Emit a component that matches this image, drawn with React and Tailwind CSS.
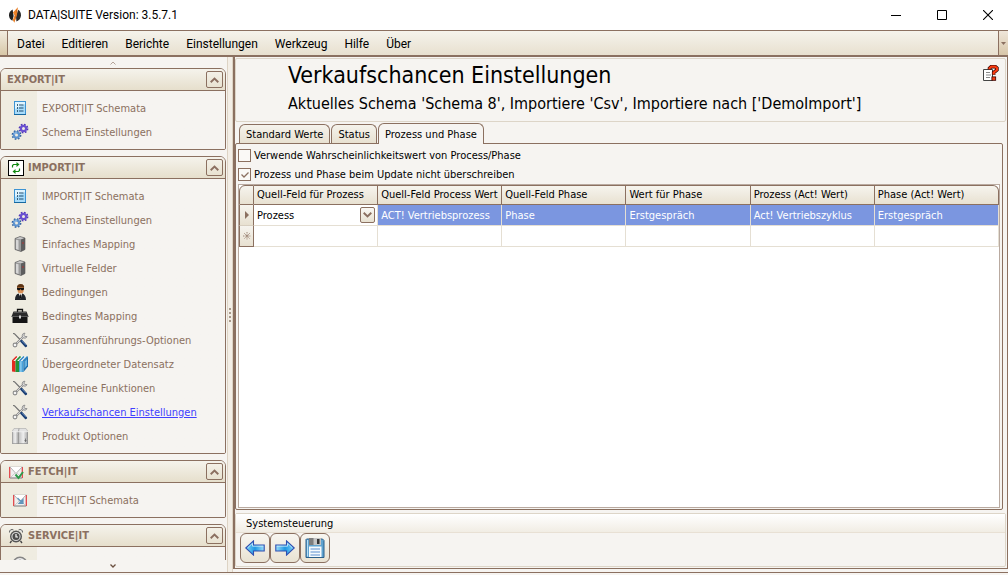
import { useState } from 'react';

function LogoIcon() {
  return (
    <svg viewBox="0 0 16 16" className="h-4 w-4 shrink-0" aria-hidden="true">
      <path d="M5.6 2.6C3 4 2 6 2 8.2c0 2.400 1.200 4.300 3.400 5.600L6.600 9z" fill="#1f1f1f" />
      <path d="M11.200 2.800C13 4 14 6 14 8.200c0 3-2 5.300-4.600 6.300L9 9z" fill="#2b2b2b" />
      <path d="M10.800.3 6 5.400 7.600 8.400 5.800 13 7.300 15.800 10 8z" fill="#f0862a" />
      <path d="M10.800.3 8.800 5l.6 3.400L7.300 15.800 9 6.500z" fill="#c4581a" />
    </svg>
  );
}

function ListIcon() {
  return (
    <svg viewBox="0 0 16 16" className="h-4 w-4" aria-hidden="true">
      <rect x="2.500" y="1.500" width="11" height="13" fill="#a9dcfa" stroke="#3d93d3" />
      <path d="M3 2h10v2L3 9z" fill="#dff4ff" />
      <path d="M5 5h1M5 8h1M5 11h1" stroke="#12364f" strokeWidth="1.300" />
      <path d="M7 5h4.500M7 8h4.500M7 11h4.500" stroke="#1f4d70" strokeWidth="1.100" />
      <path d="M2 14.500h12" stroke="#17689f" />
    </svg>
  );
}

function GearsIcon() {
  return (
    <svg viewBox="0 0 18 18" className="h-[18px] w-[18px]" aria-hidden="true">
      <circle cx="12.500" cy="5.500" r="4" fill="none" stroke="#5038b8" strokeWidth="1.800" strokeDasharray="1.600 1.542" />
      <circle cx="12.500" cy="5.500" r="2.600" fill="none" stroke="#6a50d0" strokeWidth="2.200" />
      <circle cx="5.500" cy="12" r="4" fill="none" stroke="#33629f" strokeWidth="1.800" strokeDasharray="1.600 1.542" />
      <circle cx="5.500" cy="12" r="2.600" fill="none" stroke="#5d93cf" strokeWidth="2.200" />
      <path d="M3.500 11.500a2.300 2.300 0 0 1 2-2" fill="none" stroke="#b6d6f2" strokeWidth=".8" />
    </svg>
  );
}

function ServerIcon() {
  return (
    <svg viewBox="0 0 16 16" className="h-4 w-4" aria-hidden="true">
      <path d="M3 2.500 8 .5l5 1.500v11.500L9 15.500l-6-2z" fill="#8b8b8b" />
      <path d="M3 2.500 8 .5l5 1.500-4 1.500z" fill="#c9c9c9" />
      <path d="M3 2.500 9 3.500v12l-6-2z" fill="#9a9a9a" />
      <path d="M4 3.800l2.500.4v9.800L4 13.200z" fill="#d6d6d6" />
      <path d="M9 3.500l4-1.500v11.500l-4 2z" fill="#5e5e5e" />
      <path d="M11 6v2" stroke="#a33" />
      <path d="M3 2.500 8 .5l5 1.500v11.500L9 15.500l-6-2z" fill="none" stroke="#555" strokeWidth=".6" />
    </svg>
  );
}

function AgentIcon() {
  return (
    <svg viewBox="0 0 16 16" className="h-4 w-4" aria-hidden="true">
      <path d="M5 4.500C4.500 1.500 6 0 8.700 0s3.800 1.500 3.300 4.500z" fill="#5e3413" />
      <path d="M5.500 3.500h6.200v3c0 2-1.400 3.200-3.100 3.200S5.500 8.500 5.500 6.500z" fill="#d99058" />
      <path d="M5 4h7v1.600l-1.200.7H9.400L8.600 5l-.8 1.300H6.200L5 5.500z" fill="#111" />
      <path d="M3 16c0-3.600 1.200-5.600 3.500-6.400L8.500 12l1.800-2.400C12.500 10.400 14 12.400 14 16z" fill="#20242a" />
      <path d="M7 9.500h3L8.800 15z" fill="#f6f6f6" />
      <path d="M8.100 10.500h1l.3 3-.8 1.500-.6-1.500z" fill="#111" />
    </svg>
  );
}

function BriefcaseIcon() {
  return (
    <svg viewBox="0 0 18 16" className="h-4 w-[18px]" aria-hidden="true">
      <path d="M6.500 4V1.500h5V4" fill="none" stroke="#111" strokeWidth="1.300" />
      <path d="M2.500 3.500h13l2 5H.5z" fill="#2a2a2a" />
      <rect x="1.500" y="8" width="15" height="7" fill="#151515" />
      <path d="M.5 8.500h17" stroke="#5a5a5a" />
      <path d="M3 4.500h12" stroke="#6a6a6a" strokeWidth=".7" />
      <rect x="8" y="7.500" width="2" height="3" fill="#d4d4d4" />
    </svg>
  );
}

function ToolsIcon() {
  return (
    <svg viewBox="0 0 16 16" className="h-4 w-4" aria-hidden="true">
      <path d="M1 1.500l1.500.3L9 8.500" fill="none" stroke="#707070" strokeWidth="1.100" />
      <path d="M4.300 11.800 11 5" stroke="#858585" strokeWidth="2" />
      <path d="M4.300 11.800 11 5" stroke="#e4e4e4" strokeWidth=".9" />
      <path d="M13 1.200a2.500 2.500 0 1 0 2 3.400l-2.300-.2-.9-1.400z" fill="#e0e0e0" stroke="#8a8a8a" strokeWidth=".9" />
      <circle cx="3" cy="13" r="1.900" fill="#f5f5f5" stroke="#8b8b8b" strokeWidth="1.100" />
      <path d="M9.500 9.200l4.300 4.600" stroke="#1c3f73" strokeWidth="2.700" strokeLinecap="round" />
      <path d="M9.800 8.800l4 4.200" stroke="#5e86bd" strokeWidth=".8" />
    </svg>
  );
}

function BooksIcon() {
  return (
    <svg viewBox="0 0 16 16" className="h-4 w-4" aria-hidden="true">
      <path d="M0 5 4.500.5H16L11.500 5z" fill="#f7f7f7" />
      <path d="M0 5h3.500v11L0 15.500z" fill="#e32a20" />
      <path d="M3.500 5H7v11H3.500z" fill="#219338" />
      <path d="M7 5h4.500v11H7z" fill="#4aa3da" />
      <path d="M8.300 5h1.200v11H8.300z" fill="#9ad4f4" />
      <path d="M11.500 5 16 .5v10L11.500 16z" fill="#1f6fae" />
      <path d="M12.500 5.500 15 3v6.500l-2.500 3z" fill="#67b3e0" />
      <path d="M.3 5 4.800.5" stroke="#e32a20" strokeWidth="1.500" />
      <path d="M4 5 8.500.5" stroke="#219338" strokeWidth="1.700" />
      <path d="M7.500 5 12 .5" stroke="#2f86c4" strokeWidth="1.500" />
      <path d="M11 5 15.500.5" stroke="#2f86c4" strokeWidth="1.200" />
    </svg>
  );
}

function PackageIcon() {
  return (
    <svg viewBox="0 0 16 16" className="h-4 w-4" aria-hidden="true">
      <defs>
        <linearGradient id="packageSide" x1="0" y1="0" x2="1" y2="0">
          <stop offset="0" stopColor="#bdbdbd" />
          <stop offset=".5" stopColor="#efefef" />
          <stop offset="1" stopColor="#a2a2a2" />
        </linearGradient>
      </defs>
      <path d="M0 3.500 2 .5h12l2 3z" fill="#e2e2e2" stroke="#aaa" strokeWidth=".6" />
      <path d="M0 3.500h6.500V16H0z" fill="url(#packageSide)" />
      <path d="M6.500 3.500H16V16H6.500z" fill="url(#packageSide)" />
      <path d="M6.500 16V3.500L7 .5" fill="none" stroke="#888" strokeWidth=".7" />
      <path d="M0 3.700h16" stroke="#fafafa" strokeWidth=".8" />
      <path d="M13.500 10.500v3.500M12.500 12.500h2" stroke="#666" strokeWidth=".8" />
      <path d="M.3 4v11.600h15.400V4" fill="none" stroke="#8c8c8c" strokeWidth=".7" />
    </svg>
  );
}

function MailIcon({ checked }) {
  return (
    <svg viewBox="0 0 16 16" className="h-4 w-4" aria-hidden="true">
      <rect x="1.500" y="3" width="13" height="11" fill="#efefef" stroke="#b9b9b9" strokeWidth=".7" />
      <path d="M1.700 3v11M14.300 3v11" fill="none" stroke="#e3474a" strokeWidth="1.300" />
      <path d="M2 14l5-5M14 14 9 9" stroke="#c4c4c4" strokeWidth=".8" />
      <path d="M2 3 8 9.500 14 3" fill="#fff" stroke="#a9a9a9" strokeWidth=".9" />
      <path d="M2 14h12" stroke="#8a8a8a" />
      {checked ? (
        <path d="M7.500 10.500l3 3.500L15 8" fill="none" stroke="#2e9b4b" strokeWidth="2" />
      ) : (
        <path d="M5.500 6l4.500 4.500M11 7.500V11.500H7z" fill="#7aa6c4" stroke="#5e93ba" strokeWidth="1.200" />
      )}
    </svg>
  );
}

function RefreshIcon() {
  return (
    <svg viewBox="0 0 16 16" className="h-4 w-4" aria-hidden="true">
      <rect x=".5" y=".5" width="15" height="15" fill="#fff" stroke="#000" />
      <path d="M4.500 7.500v-2l1-1h4M11.500 8.500v2l-1 1h-4" fill="none" stroke="#138a13" strokeWidth="1.200" />
      <path d="M8.500 2l3 2.500-3 2.500zM7.500 9l-3 2.500 3 2.500z" fill="#138a13" />
    </svg>
  );
}

function ClockIcon() {
  return (
    <svg viewBox="0 0 16 16" className="h-4 w-4" aria-hidden="true">
      <path d="M1.500 4.500a2.500 2.500 0 0 1 4-2.500M14.500 4.500a2.500 2.500 0 0 0-4-2.500" fill="#ddd" stroke="#666" />
      <path d="M3.500 13 2 15M12.500 13l1.500 2" stroke="#444" strokeWidth="1.300" />
      <circle cx="8" cy="8.500" r="5.300" fill="#d8d8d8" stroke="#555" strokeWidth="1.400" />
      <circle cx="8" cy="8.500" r="3.500" fill="#4b4b4b" />
      <path d="M8 6v3h2" fill="none" stroke="#fff" strokeWidth="1.200" />
    </svg>
  );
}

function TaskClockIcon() {
  return (
    <svg viewBox="0 0 16 16" className="h-4 w-4" aria-hidden="true">
      <circle cx="8" cy="8" r="6.800" fill="#ededed" stroke="#858585" strokeWidth="1.600" />
      <path d="M8 3.500V8l3 2" fill="none" stroke="#777" />
    </svg>
  );
}

function HelpIcon() {
  return (
    <svg viewBox="0 0 16 16" className="h-4 w-4" aria-hidden="true">
      <path d="M.5 4.500h9v11h-9z" fill="#fff" stroke="#444" />
      <path d="M3 7.500h4M3 10h5M3 12.500h4" stroke="#8a8a8a" />
      <path d="M6.500 4.500V3.200L8.300 1.600h3.900L13.900 3v2L10.700 7.600v2.200" fill="none" stroke="#300" strokeWidth="3.600" />
      <path d="M6.500 4.200V3.200L8.300 1.600h3.900L13.900 3v2L10.700 7.600v1.900" fill="none" stroke="#fa3c10" strokeWidth="2.200" />
      <rect x="8.900" y="11.900" width="3.800" height="3.400" fill="#fa3c10" stroke="#300" strokeWidth=".8" />
    </svg>
  );
}

function ArrowIcon({ flipped }) {
  return (
    <svg viewBox="0 0 20 16" className={`h-4 w-5 ${flipped ? '-scale-x-100' : ''}`} aria-hidden="true">
      <defs>
        <linearGradient id="arrowFill" x1="0" y1="0" x2="1" y2="0">
          <stop offset="0" stopColor="#7fd4fa" />
          <stop offset=".5" stopColor="#1f98e2" />
          <stop offset="1" stopColor="#9adcfa" />
        </linearGradient>
      </defs>
      <path d="M.8 8 8.500.9V5h10.700v6H8.500v4.100z" fill="url(#arrowFill)" stroke="#2f4fb0" strokeWidth="1.100" />
      <path d="M2.600 7.800 7.500 3.300V6.200h10.800" fill="none" stroke="#d3f0fd" strokeWidth=".8" />
    </svg>
  );
}

function SaveIcon() {
  return (
    <svg viewBox="0 0 20 20" className="h-5 w-5" aria-hidden="true">
      <path d="M1.500 1h16l1.500 1.500V19.500H1V1.500z" fill="#5fa3d0" stroke="#2b5f8a" />
      <path d="M2.500 2v16.500" stroke="#b7def5" />
      <rect x="4" y="0" width="12" height="7" fill="#c4c4c4" />
      <path d="M4 0h4.500v7H4z" fill="#7d7d7d" />
      <rect x="12" y="1" width="2.500" height="5" fill="#333" />
      <rect x="4" y="8.500" width="12.500" height="10.500" fill="#f5fafd" />
      <path d="M5.500 11h9.500M5.500 14h9.500M5.500 17h9.500" stroke="#5a8fd0" />
    </svg>
  );
}

function Chevron({ up }) {
  return (
    <svg viewBox="0 0 9 6" className={`h-1.5 w-[9px] ${up ? '' : 'rotate-180'}`} aria-hidden="true">
      <path d="M.7 5.200 4.500 1.500l3.800 3.700" fill="none" stroke="#8b6f60" strokeWidth="1.900" />
    </svg>
  );
}

const menuItems = ['Datei', 'Editieren', 'Berichte', 'Einstellungen', 'Werkzeug', 'Hilfe', 'Über'];

const groups = [
  {
    title: 'EXPORT|IT',
    items: [
      { label: 'EXPORT|IT Schemata', icon: <ListIcon /> },
      { label: 'Schema Einstellungen', icon: <GearsIcon /> },
    ],
  },
  {
    title: 'IMPORT|IT',
    icon: <RefreshIcon />,
    items: [
      { label: 'IMPORT|IT Schemata', icon: <ListIcon /> },
      { label: 'Schema Einstellungen', icon: <GearsIcon /> },
      { label: 'Einfaches Mapping', icon: <ServerIcon /> },
      { label: 'Virtuelle Felder', icon: <ServerIcon /> },
      { label: 'Bedingungen', icon: <AgentIcon /> },
      { label: 'Bedingtes Mapping', icon: <BriefcaseIcon /> },
      { label: 'Zusammenführungs-Optionen', icon: <ToolsIcon /> },
      { label: 'Übergeordneter Datensatz', icon: <BooksIcon /> },
      { label: 'Allgemeine Funktionen', icon: <ToolsIcon /> },
      { label: 'Verkaufschancen Einstellungen', icon: <ToolsIcon />, active: true },
      { label: 'Produkt Optionen', icon: <PackageIcon /> },
    ],
  },
  {
    title: 'FETCH|IT',
    icon: <MailIcon checked />,
    items: [{ label: 'FETCH|IT Schemata', icon: <MailIcon /> }],
  },
  {
    title: 'SERVICE|IT',
    icon: <ClockIcon />,
    items: [{ label: 'Tasks', icon: <TaskClockIcon /> }],
  },
];

const tabs = ['Standard Werte', 'Status', 'Prozess und Phase'];

const columns = [
  'Quell-Feld für Prozess',
  'Quell-Feld Process Wert',
  'Quell-Feld Phase',
  'Wert für Phase',
  'Prozess (Act! Wert)',
  'Phase (Act! Wert)',
];

const rowValues = ['ACT! Vertriebsprozess', 'Phase', 'Erstgespräch', 'Act! Vertriebszyklus', 'Erstgespräch'];

function TitleBar() {
  return (
    <header className="flex h-[30px] shrink-0 items-center bg-white pr-[15px] pl-[7px] font-[Roboto,sans-serif] text-xs text-black">
      <LogoIcon />
      <h1 className="ml-[5px] flex-1">DATA|SUITE Version: 3.5.7.1</h1>
      <div className="flex h-full gap-9">
        <button type="button" aria-label="Minimieren">
          <svg viewBox="0 0 10 10" className="h-2.5 w-2.5"><path d="M0 5.500h10" stroke="#000" /></svg>
        </button>
        <button type="button" aria-label="Maximieren">
          <svg viewBox="0 0 10 10" className="h-2.5 w-2.5"><path d="M.5.5h9v9h-9z" fill="none" stroke="#000" /></svg>
        </button>
        <button type="button" aria-label="Schließen">
          <svg viewBox="0 0 10 10" className="h-2.5 w-2.5"><path d="M0 0l10 10M10 0 0 10" stroke="#000" strokeWidth="1.100" /></svg>
        </button>
      </div>
    </header>
  );
}

function MenuBar() {
  return (
    <nav className="flex h-[27px] shrink-0 border-t border-b-2 border-[#8b7060] bg-linear-to-b from-[#f5f3ec] to-[#e8e0cf] font-[Roboto,sans-serif] text-xs text-black">
      <div className="w-2 border-r border-[#8b7060] bg-linear-to-b from-[#f1ece0] to-[#d8c8a8]" />
      <ul className="flex flex-1 items-center gap-[17px] pt-px pl-[9px]">
        {menuItems.map((item) => (
          <li key={item}>
            <button type="button">{item}</button>
          </li>
        ))}
      </ul>
      <button
        type="button"
        aria-label="Weitere Befehle"
        className="flex w-2.5 items-center justify-center border-l border-[#8b7060] bg-linear-to-b from-[#efe6da] to-[#d8c6a8]"
      >
        <svg viewBox="0 0 5 3" className="h-[3px] w-[5px]"><path d="M0 0h5L2.500 3z" fill="#8b7060" /></svg>
      </button>
    </nav>
  );
}

function SidebarGroup({ group }) {
  const [open, setOpen] = useState(true);

  return (
    <section className="shrink-0 overflow-hidden rounded-t-md rounded-b-xs border border-[#8b7060]">
      <div className="flex h-[22px] items-center border-b border-[#8b7060] bg-linear-to-b from-[#f5f3ec] to-[#e6dfcc] pr-0.5 pl-1.5">
        {group.icon && <span className="mr-1 ml-px">{group.icon}</span>}
        <h2 className="flex-1 text-[11px] font-bold text-[#8b7060]">{group.title}</h2>
        <button
          type="button"
          aria-label={group.title}
          aria-expanded={open}
          onClick={() => setOpen(!open)}
          className="flex h-[17px] w-[17px] items-center justify-center rounded-xs border border-[#8b7060]"
        >
          <Chevron up={open} />
        </button>
      </div>
      {open && (
        <ul className="bg-linear-to-r from-[#efece1] from-[36px] to-[#f6f4f1] to-[36px] py-[5px]">
          {group.items.map((item) => (
            <li key={item.label} className="flex h-6 items-center">
              <span className="flex w-[38px] justify-center">{item.icon}</span>
              <a
                href="#"
                className={`ml-[3px] pt-0.5 whitespace-nowrap ${item.active ? 'text-[#4040ff] underline' : 'text-[#8b7060]'}`}
              >
                {item.label}
              </a>
            </li>
          ))}
        </ul>
      )}
    </section>
  );
}

function Sidebar() {
  return (
    <aside className="flex w-[226px] shrink-0 flex-col">
      <button type="button" aria-label="Nach oben" className="flex h-[11px] shrink-0 items-center justify-center opacity-60">
        <svg viewBox="0 0 6 4" className="h-1 w-1.5"><path d="M.5 3.500 3 1l2.500 2.500" fill="none" stroke="#8b7060" /></svg>
      </button>
      <div className="flex min-h-0 flex-1 flex-col gap-1.5 overflow-hidden">
        {groups.map((group) => (
          <SidebarGroup key={group.title} group={group} />
        ))}
      </div>
      <button type="button" aria-label="Nach unten" className="flex h-3 shrink-0 items-center justify-center">
        <svg viewBox="0 0 6 4" className="h-1 w-1.5"><path d="M.5.5 3 3 5.500.5" fill="none" stroke="#6b5040" strokeWidth="1.300" /></svg>
      </button>
    </aside>
  );
}

function Option({ label, checked, onChange }) {
  return (
    <label className="flex h-[19px] items-center gap-[3px]">
      <input
        type="checkbox"
        checked={checked}
        onChange={(event) => onChange(event.target.checked)}
        className="peer sr-only"
      />
      <span className="flex h-[13px] w-[13px] items-center justify-center border border-[#8b7060] bg-[#faf9f6]">
        {checked && (
          <svg viewBox="0 0 8 8" className="h-2 w-2"><path d="M.5 3.500 3 6l4.500-4.500" fill="none" stroke="#8b7060" strokeWidth="1.300" /></svg>
        )}
      </span>
      {label}
    </label>
  );
}

function MappingTable() {
  const [source, setSource] = useState('Prozess');

  return (
    <div className="min-h-0 flex-1 border border-[#b9aaa0] bg-white">
      <table className="w-full table-fixed border-separate border-spacing-0 text-left">
        <colgroup>
          <col className="w-[15px]" />
          {columns.map((column) => (
            <col key={column} />
          ))}
        </colgroup>
        <thead>
          <tr className="h-5">
            <th className="rounded-tl-md border border-[#8b7060] bg-linear-to-b from-[#f6f4ee] to-[#e8e1d1] p-0" aria-label="Zeile" />
            {columns.map((column) => (
              <th
                key={column}
                scope="col"
                className="overflow-hidden border-y border-r border-[#8b7060] bg-linear-to-b from-[#f6f4ee] to-[#e8e1d1] p-0 pl-[3px] font-normal whitespace-nowrap last:rounded-tr-md"
              >
                {column}
              </th>
            ))}
          </tr>
        </thead>
        <tbody>
          <tr className="h-[21px]">
            <td className="border-r border-b border-l border-[#8b7060] border-b-[#d8cfc0] bg-linear-to-b from-[#f6f4ee] to-[#e8e1d1] p-0">
              <svg viewBox="0 0 4 8" className="mx-auto h-2 w-1"><path d="M0 0l4 4-4 4z" fill="#8b7060" /></svg>
            </td>
            <td className="border-r border-b border-[#e5dfd3] p-0">
              <div className="relative">
                <select
                  aria-label="Quell-Feld für Prozess"
                  value={source}
                  onChange={(event) => setSource(event.target.value)}
                  className="block h-5 w-full appearance-none pt-px pl-[3px] outline-none"
                >
                  <option>Prozess</option>
                  <option>Phase</option>
                </select>
                <span className="pointer-events-none absolute top-0.5 right-0.5 flex h-4 w-[15px] items-center justify-center rounded-xs border border-[#8b7060] bg-linear-to-b from-[#faf8f4] to-[#e8e1d1]">
                  <Chevron />
                </span>
              </div>
            </td>
            {rowValues.map((value, index) => (
              <td
                key={index}
                className="border-r border-b border-[#e5dfd3] bg-[#7b96e0] p-0 pt-px pl-[3px] whitespace-nowrap text-white"
              >
                {value}
              </td>
            ))}
          </tr>
          <tr className="h-[21px]">
            <td className="border-r border-b border-l border-[#8b7060] bg-linear-to-b from-[#f6f4ee] to-[#e8e1d1] p-0">
              <svg viewBox="0 0 8 8" className="mx-auto h-2 w-2">
                <path d="M4 0v8M0 4h8M1 1l6 6M7 1 1 7" stroke="#8b7060" strokeWidth=".8" strokeDasharray="1 .6" />
              </svg>
            </td>
            {columns.map((column) => (
              <td key={column} className="border-r border-b border-[#e5dfd3] p-0" />
            ))}
          </tr>
        </tbody>
      </table>
    </div>
  );
}

function SettingsPanel() {
  const [activeTab, setActiveTab] = useState('Prozess und Phase');
  const [useProbability, setUseProbability] = useState(false);
  const [keepOnUpdate, setKeepOnUpdate] = useState(true);

  return (
    <main className="mb-[3px] flex min-w-0 flex-1 flex-col border-r border-b border-l-2 border-[#8b7060] pt-px pr-px pb-px">
      <div className="flex h-16 shrink-0 items-start justify-between rounded-xs border border-[#ddd5c8] pr-1.5 pl-[52px] text-black">
        <div>
          <h2 className="text-[23px] leading-8">Verkaufschancen Einstellungen</h2>
          <p className="text-base leading-[26px]">
            Aktuelles Schema 'Schema 8', Importiere 'Csv', Importiere nach ['DemoImport']
          </p>
        </div>
        <button type="button" aria-label="Hilfe" className="mt-1.5">
          <HelpIcon />
        </button>
      </div>

      <div role="tablist" className="mt-px flex h-5 shrink-0 items-end gap-px pl-1 text-black">
        {tabs.map((tab) => (
          <button
            key={tab}
            type="button"
            role="tab"
            aria-selected={tab === activeTab}
            onClick={() => setActiveTab(tab)}
            className={`rounded-t-md border border-b-0 border-[#8b7060] px-1.5 pt-px whitespace-nowrap ${
              tab === activeTab
                ? 'z-10 -mb-px h-[21px] bg-[#f6f4f1]'
                : 'h-[19px] bg-linear-to-b from-[#f5f3ec] to-[#e8e1d1]'
            }`}
          >
            {tab}
          </button>
        ))}
      </div>

      <div
        role="tabpanel"
        className="mr-[3px] flex min-h-0 flex-1 flex-col rounded-xs border border-[#8b7060] px-0.5 pt-0.5 pb-px text-black"
      >
        <Option
          label="Verwende Wahrscheinlichkeitswert von Process/Phase"
          checked={useProbability}
          onChange={setUseProbability}
        />
        <Option
          label="Prozess und Phase beim Update nicht überschreiben"
          checked={keepOnUpdate}
          onChange={setKeepOnUpdate}
        />
        <MappingTable />
      </div>

      <section className="mt-[3px] h-[54px] shrink-0 rounded-xs border border-[#ddd5c8] text-black">
        <h3 className="h-[19px] border-b border-[#e8e0d4] bg-linear-to-b from-white to-[#f1ede4] pl-2.5 leading-5">
          Systemsteuerung
        </h3>
        <div className="flex pl-1">
          <button type="button" aria-label="Zurück" className="flex h-[30px] w-[30px] items-center justify-center rounded-md border border-[#8b7060] bg-linear-to-b from-[#f8f6f1] to-[#e9e2d2]">
            <ArrowIcon />
          </button>
          <button type="button" aria-label="Weiter" className="flex h-[30px] w-[30px] items-center justify-center rounded-md border border-[#8b7060] bg-linear-to-b from-[#f8f6f1] to-[#e9e2d2]">
            <ArrowIcon flipped />
          </button>
          <button type="button" aria-label="Speichern" className="flex h-[30px] w-[30px] items-center justify-center rounded-md border border-[#8b7060] bg-linear-to-b from-[#f8f6f1] to-[#e9e2d2]">
            <SaveIcon />
          </button>
        </div>
      </section>
    </main>
  );
}

export default function App() {
  return (
    <div className="flex h-screen flex-col bg-[#f6f4f1] font-['DejaVu_Sans_Condensed','DejaVu_Sans',sans-serif] text-[11px] leading-4">
      <TitleBar />
      <MenuBar />
      <div className="flex min-h-0 flex-1 border-b border-[#8b7060]">
        <Sidebar />
        <div className="ml-px flex w-1.5 shrink-0 flex-col items-center justify-center border-x border-[#ddd3c4] bg-[#f3eee6]">
          <svg viewBox="0 0 2 14" className="h-3.5 w-0.5" aria-hidden="true">
            <path d="M1 0v14" stroke="#a8988a" strokeWidth="2" strokeDasharray="2 2" />
          </svg>
        </div>
        <SettingsPanel />
      </div>
      <div className="h-0.5 shrink-0" />
    </div>
  );
}
